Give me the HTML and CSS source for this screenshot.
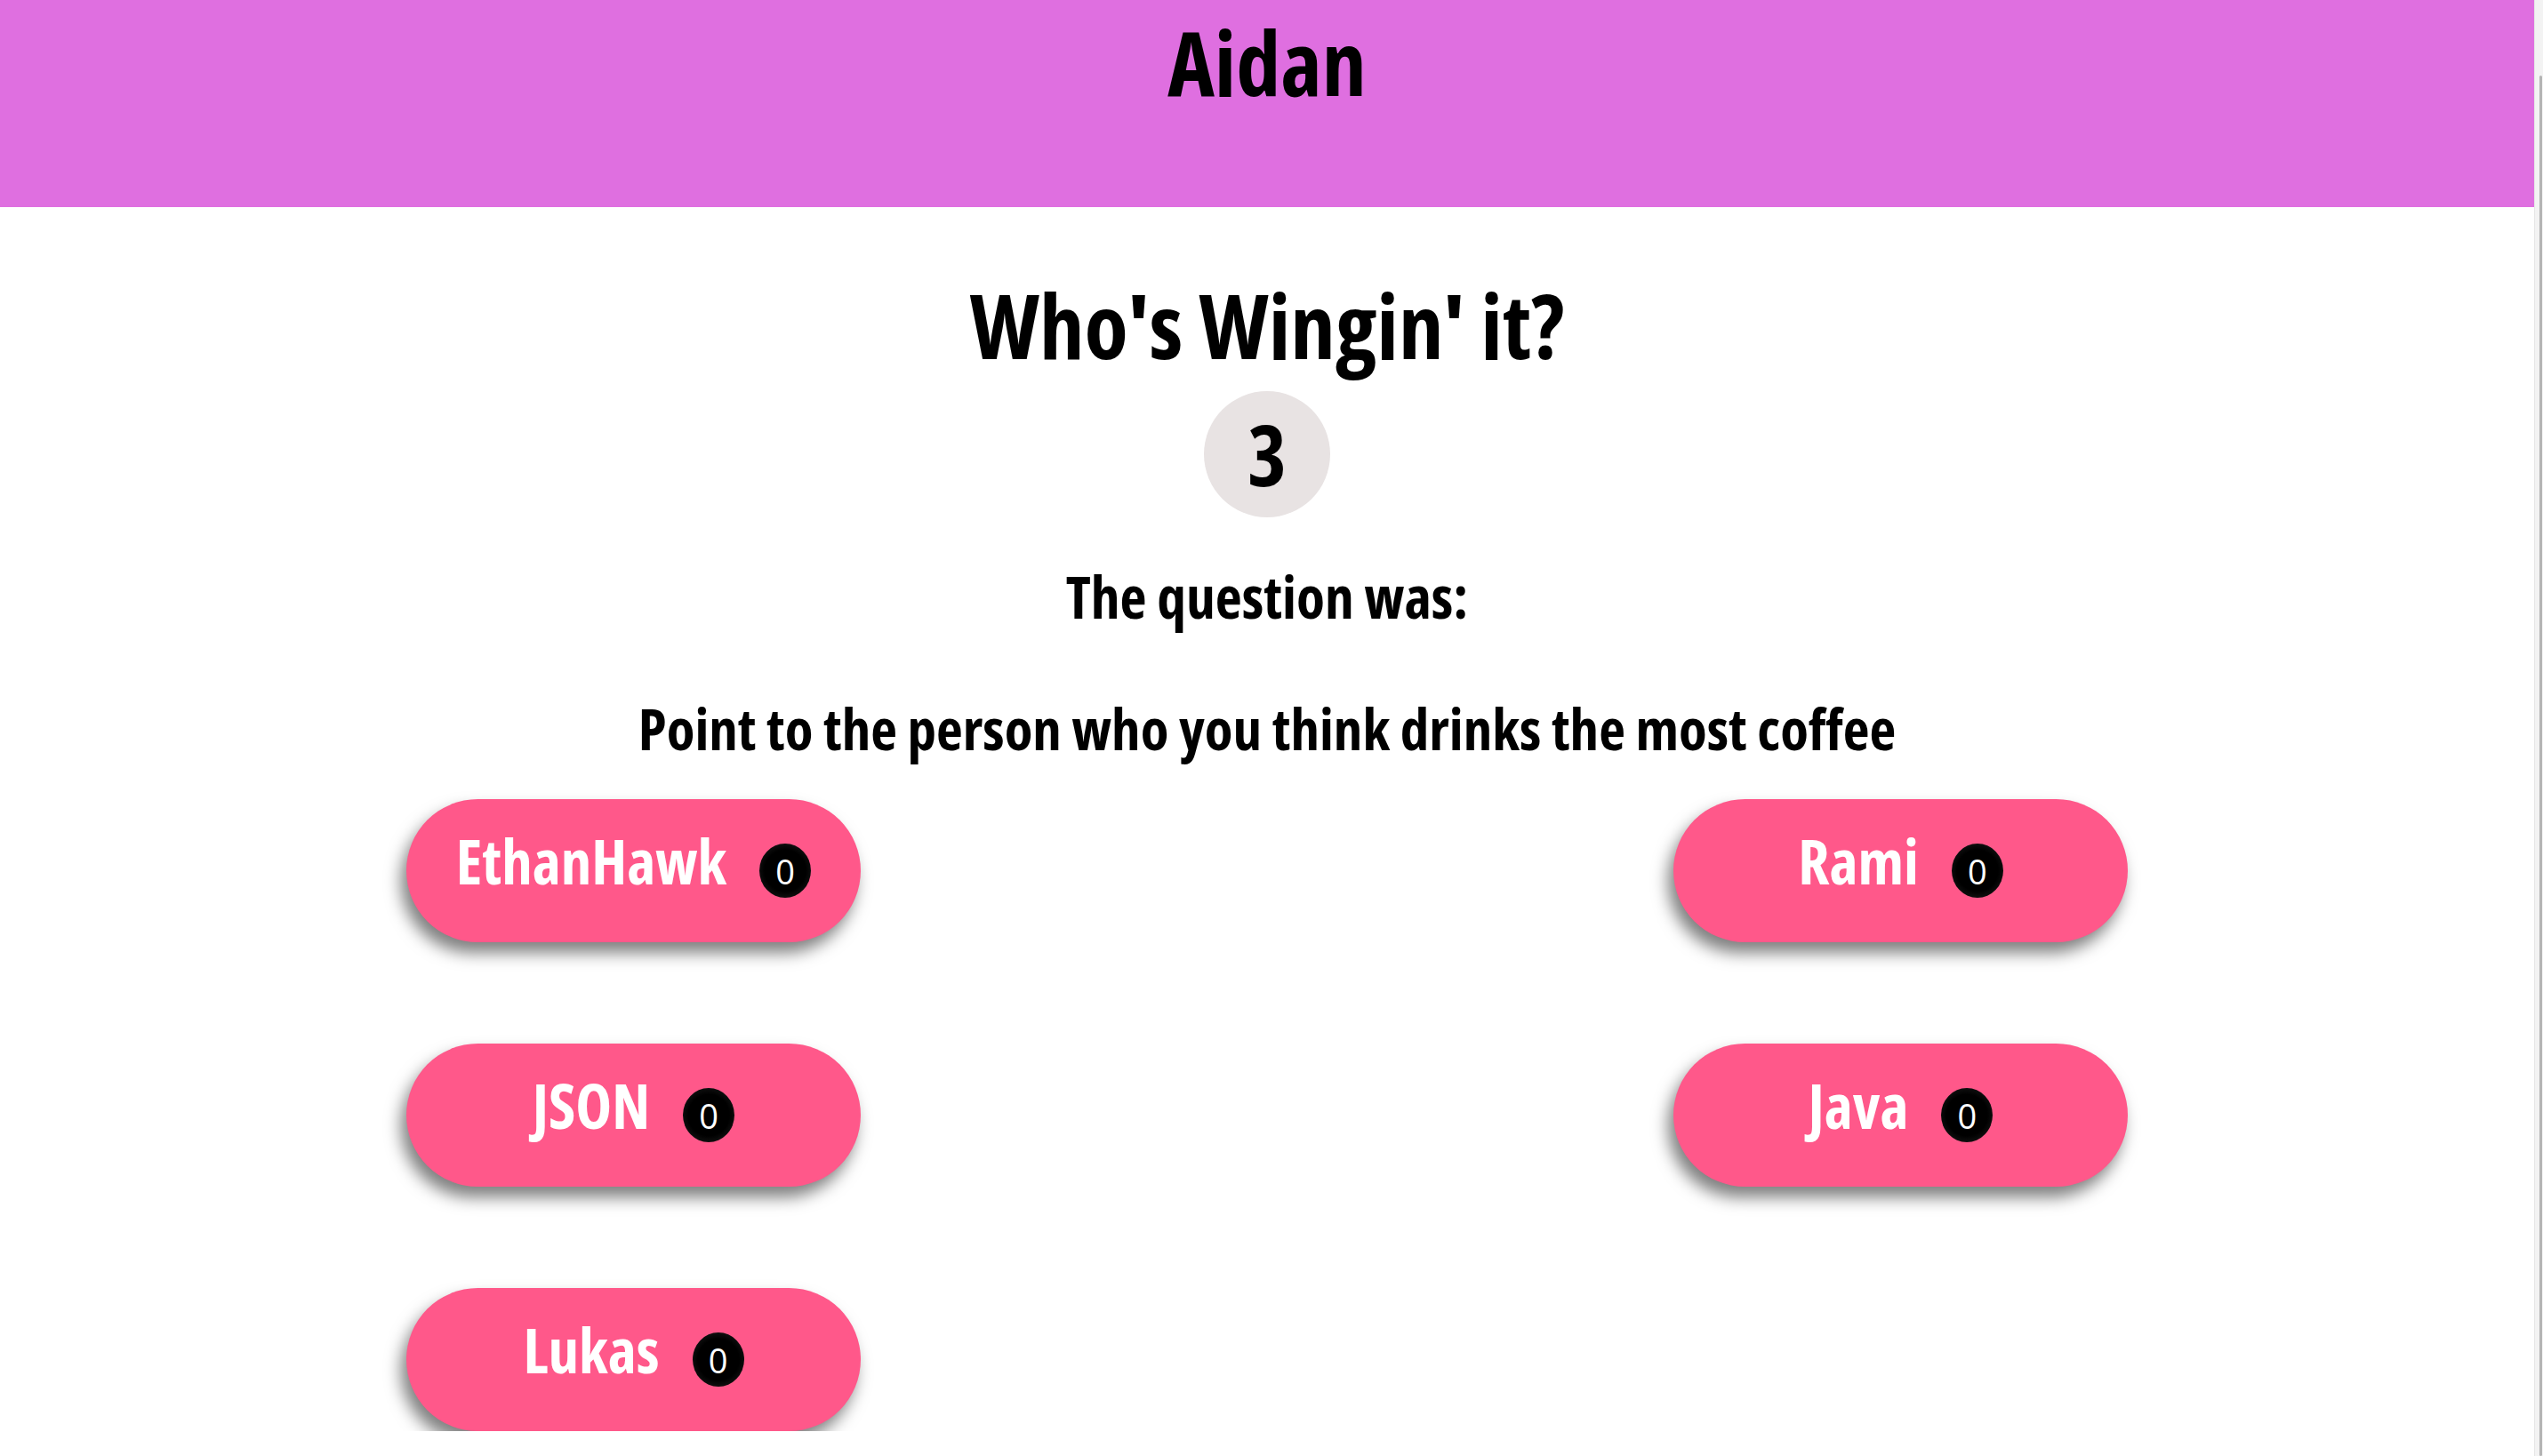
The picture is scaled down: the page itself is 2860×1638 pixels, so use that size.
FILE: index.html
```html
<!DOCTYPE html>
<html lang="en">
<head>
<meta charset="utf-8">
<title>Who's Wingin' it?</title>
<link rel="stylesheet" href="styles.css">
</head>
<body>
<div class="page">
  <header class="topbar">
    <h1 class="player-name">Aidan</h1>
  </header>
  <main class="round">
    <h1 class="title">Who's Wingin' it?</h1>
    <div class="countdown">3</div>
    <h2 class="label">The question was:</h2>
    <h2 class="question">Point to the person who you think drinks the most coffee</h2>
    <div class="players">
      <button class="player"><span class="name">EthanHawk</span><span class="badge">0</span></button>
      <button class="player"><span class="name">Rami</span><span class="badge">0</span></button>
      <button class="player"><span class="name">JSON</span><span class="badge">0</span></button>
      <button class="player"><span class="name">Java</span><span class="badge">0</span></button>
      <button class="player"><span class="name">Lukas</span><span class="badge">0</span></button>
    </div>
  </main>
</div>
<div class="scrollbar"><div class="scrollbar-thumb"></div></div>
</body>
</html>
```

FILE: styles.css
```css
html, body {
  margin: 0;
  padding: 0;
  background: #ffffff;
  overflow: hidden;
}

body {
  font-family: "Open Sans", "DejaVu Sans Condensed", sans-serif;
  font-stretch: 75%;
  color: #000000;
}

.page {
  width: 2850px;
}

.topbar {
  height: 233px;
  background: #df6fe0;
  text-align: center;
  padding-top: 12px;
  box-sizing: border-box;
}

.player-name {
  margin: 0;
  font-size: 100px;
  line-height: 1.15;
  font-weight: 700;
}

.round {
  display: flex;
  flex-direction: column;
  align-items: center;
}

.title {
  margin: 74px 0 17px;
  font-size: 101px;
  line-height: 1.15;
  font-weight: 700;
}

.countdown {
  width: 142px;
  height: 142px;
  border-radius: 50%;
  background: #e8e3e3;
  display: flex;
  align-items: center;
  justify-content: center;
  font-size: 94px;
  font-weight: 700;
  line-height: 1;
}

.label {
  margin: 51px 0 0;
  font-size: 65.5px;
  line-height: 1.15;
  font-weight: 700;
}

.question {
  margin: 74px 0 0;
  font-size: 65px;
  line-height: 1.15;
  font-weight: 700;
}

.players {
  margin-top: 42px;
  width: 100%;
  display: grid;
  grid-template-columns: 1fr 1fr;
  row-gap: 114px;
  justify-items: center;
}

.player {
  width: 511px;
  height: 161px;
  border: none;
  border-radius: 81px;
  background: #ff588a;
  box-shadow: -6px 12px 18px rgba(0, 0, 0, 0.5);
  display: flex;
  align-items: center;
  justify-content: center;
  gap: 37px;
  padding: 0;
  font-family: inherit;
  font-stretch: 75%;
  color: #ffffff;
  font-size: 69px;
  font-weight: 700;
}

.name {
  padding-bottom: 22px;
  line-height: 1.15;
}

.badge {
  width: 58px;
  height: 61px;
  border-radius: 50%;
  background: radial-gradient(circle at 50% 50%, #000000 55%, #262626 100%);
  display: flex;
  align-items: center;
  justify-content: center;
  font-stretch: 100%;
  font-size: 38px;
  font-weight: 400;
  color: #ffffff;
  line-height: 1;
}

.scrollbar {
  position: fixed;
  top: 0;
  right: 0;
  width: 10px;
  height: 100%;
  background: #f3f3f3;
  border-left: 1px solid #e6e6e6;
  box-sizing: border-box;
}

.scrollbar-thumb {
  position: absolute;
  top: 85px;
  right: 1px;
  width: 3px;
  bottom: 0;
  background: #b4b4b4;
  border-radius: 2px;
}
```
